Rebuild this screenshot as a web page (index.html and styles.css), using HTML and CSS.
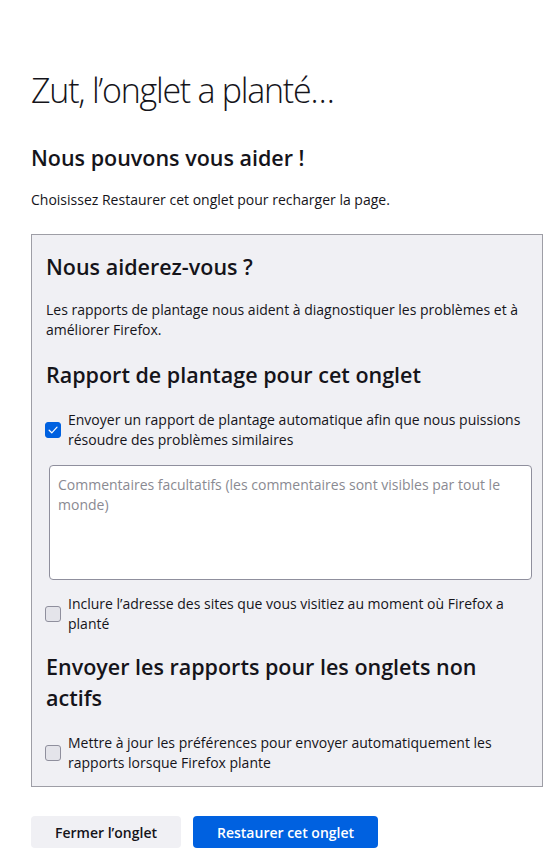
FILE: index.html
```html
<!DOCTYPE html>
<html lang="fr">
<head>
<meta charset="utf-8">
<title>Onglet planté</title>
<link rel="stylesheet" href="styles.css">
</head>
<body>
<main class="page">
  <h1 class="title">Zut, l’onglet a planté…</h1>
  <h2 class="heading help">Nous pouvons vous aider !</h2>
  <p class="text">Choisissez Restaurer cet onglet pour recharger la page.</p>

  <section class="report">
    <h2 class="heading">Nous aiderez-vous ?</h2>
    <p class="text intro">Les rapports de plantage nous aident à diagnostiquer les problèmes et à améliorer Firefox.</p>

    <h2 class="heading tab-title">Rapport de plantage pour cet onglet</h2>
    <label class="check-row first">
      <span class="box checked">
        <svg viewBox="0 0 16 16" width="16" height="16"><path d="M3.6 8.3 L6.6 11.2 L12.6 4.8" fill="none" stroke="#fff" stroke-width="1.4" stroke-linecap="round" stroke-linejoin="round"/></svg>
      </span>
      <span class="label">Envoyer un rapport de plantage automatique afin que nous puissions résoudre des problèmes similaires</span>
    </label>
    <textarea class="comments" placeholder="Commentaires facultatifs (les commentaires sont visibles par tout le monde)"></textarea>
    <label class="check-row url">
      <span class="box"></span>
      <span class="label">Inclure l’adresse des sites que vous visitiez au moment où Firefox a planté</span>
    </label>

    <h2 class="heading unsubmitted">Envoyer les rapports pour les onglets non actifs</h2>
    <label class="check-row auto">
      <span class="box"></span>
      <span class="label">Mettre à jour les préférences pour envoyer automatiquement les rapports lorsque Firefox plante</span>
    </label>
  </section>

  <div class="buttons">
    <button class="btn secondary">Fermer l’onglet</button>
    <button class="btn primary">Restaurer cet onglet</button>
  </div>
</main>
</body>
</html>
```

FILE: styles.css
```css
html, body {
  margin: 0;
  padding: 0;
  background: #ffffff;
}

body {
  font-family: "Open Sans", "Noto Sans", "Liberation Sans", sans-serif;
  font-size: 14px;
  color: #15141a;
}

.page {
  width: 512px;
  margin-left: 31px;
  padding-top: 68px;
  padding-bottom: 20px;
}

.title {
  margin: 0;
  font-size: 34px;
  font-weight: 300;
  line-height: 44px;
  letter-spacing: -1.25px;
  color: #15141a;
}

.heading {
  margin: 0;
  font-size: 21.5px;
  font-weight: 600;
  line-height: 30px;
}

.help {
  margin-top: 31px;
}

.text {
  margin: 17px 0 0;
  line-height: 20px;
}

.report {
  margin-top: 24px;
  background: #f0f0f4;
  border: 1px solid #9e9ea6;
  padding: 17px 10px 14px 14px;
}

.intro {
  margin-top: 18px;
  padding-right: 4px;
}

.tab-title {
  margin-top: 20px;
}

.check-row {
  display: flex;
  align-items: center;
  gap: 7px;
  margin-left: -1px;
  line-height: 19.5px;
}

.check-row.first {
  margin-top: 20px;
}

.check-row.url {
  margin-top: 14px;
}

.check-row.auto {
  margin-top: 20px;
}

.box {
  flex: none;
  width: 16px;
  height: 16px;
  box-sizing: border-box;
  border: 1px solid #8f8f9d;
  border-radius: 3px;
  background: #e4e4ea;
  display: flex;
  align-items: center;
  justify-content: center;
}

.box.checked {
  background: #0061e0;
  border-color: #0061e0;
}

.box svg {
  display: block;
}

.label {
  flex: 1;
}

.comments {
  display: block;
  box-sizing: border-box;
  width: 483px;
  height: 115px;
  margin: 16px 0 0 3px;
  padding: 9px 8px;
  border: 1px solid #8f8f9d;
  border-radius: 4px;
  background: #ffffff;
  font-family: inherit;
  font-size: 14px;
  line-height: 20px;
  color: #15141a;
  resize: none;
}

.comments::placeholder {
  color: #8a8a92;
  opacity: 1;
}

.unsubmitted {
  margin-top: 18px;
  line-height: 31px;
  max-width: 470px;
}

.buttons {
  display: flex;
  gap: 12px;
  margin-top: 29px;
}

.btn {
  height: 32px;
  padding: 0 24px;
  border: none;
  border-radius: 4px;
  font-family: inherit;
  font-size: 14px;
  font-weight: 600;
}

.secondary {
  background: #f0f0f4;
  color: #15141a;
}

.primary {
  background: #0061e0;
  color: #ffffff;
}
```
